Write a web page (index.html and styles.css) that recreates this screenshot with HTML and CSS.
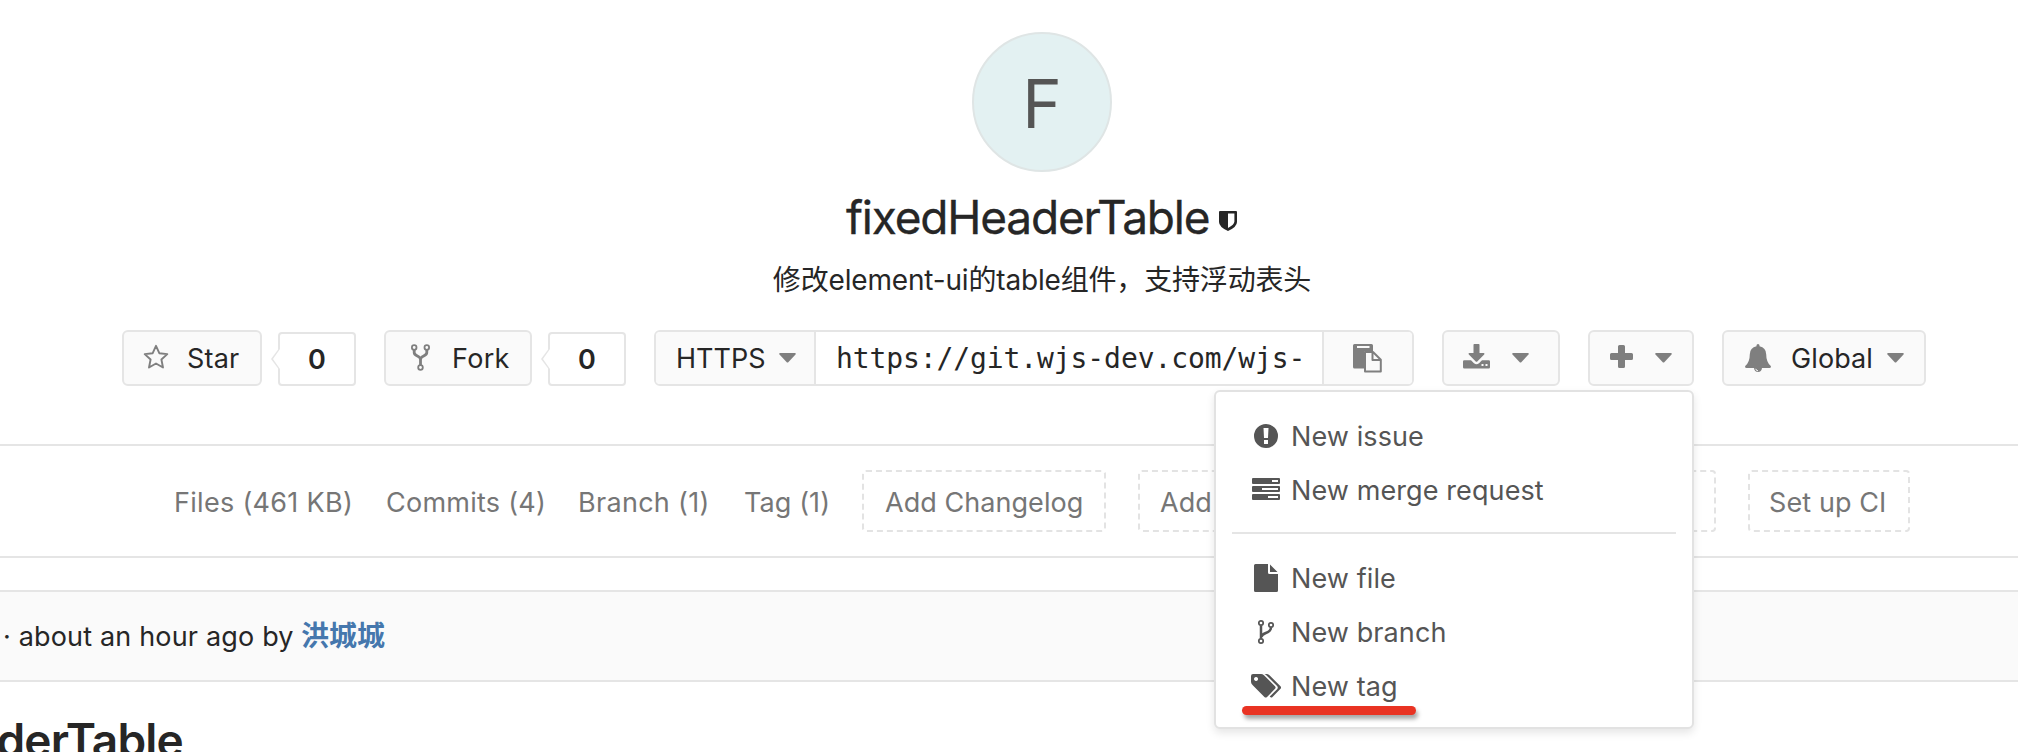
FILE: index.html
```html
<!DOCTYPE html>
<html lang="en">
<head>
<meta charset="utf-8">
<title>fixedHeaderTable</title>
<link rel="stylesheet" href="styles.css">
</head>
<body>
<header class="project">
  <div class="avatar">F</div>
  <h1 class="project-name"><span class="name-text">fixedHeaderTable</span>
    <svg class="shield" width="18" height="20" viewBox="0 0 18 20"><path fill="currentColor" fill-rule="evenodd" d="M1 0h16q1 0 1 1v10q0 5-9 9-9-4-9-9V1q0-1 1-1zm8 2.600v14.400q6.400-3.500 6.400-6.500V2.600z"/></svg>
  </h1>
  <p class="description">修改element-ui的table组件，支持浮动表头</p>
</header>

<div class="controls">
  <button class="btn star"><svg width="26" height="25" viewBox="0 0 26 25"><path fill="none" stroke="currentColor" stroke-width="1.900" stroke-linejoin="round" d="M13 1.800l3.300 7.400 8 .9-5.900 5.400 1.600 8L13 19.500l-7 4 1.600-8L1.700 10.100l8-.9z"/></svg><span class="t-star">Star</span></button>
  <span class="count">0</span>
  <button class="btn fork"><svg width="19" height="27" viewBox="0 0 19 27"><g fill="none" stroke="currentColor"><circle cx="3.200" cy="3.500" r="2.300" stroke-width="1.800"/><circle cx="15.800" cy="3.500" r="2.300" stroke-width="1.800"/><circle cx="9.500" cy="23.500" r="2.300" stroke-width="1.800"/><path stroke-width="2.800" d="M3.200 6v2.500c0 4 6.300 3 6.300 7V21M15.800 6v2.500c0 4-6.300 3-6.300 7"/></g></svg><span class="t-fork">Fork</span></button>
  <span class="count">0</span>
  <div class="clone">
    <button class="protocol"><span class="t-https">HTTPS</span><svg class="caret" width="17" height="10" viewBox="0 0 17 10"><path fill="currentColor" d="M1.200 0h14.600q1.600.2.700 1.600L9.500 8.900q-1 1-2 0L.5 1.600Q-.4.200 1.200 0z"/></svg></button>
    <div class="url">https://git.wjs-dev.com/wjs-</div>
    <button class="copy"><svg width="29" height="29" viewBox="0 0 29 29"><path fill="currentColor" fill-rule="evenodd" d="M1.500 0h17Q20 0 20 1.500V7h-7q-2 0-2 2v15.500H1.500Q0 24.500 0 23V1.500Q0 0 1.500 0zM4 2v2h12.500V2z"/><path fill="none" stroke="currentColor" stroke-width="2" stroke-linejoin="round" d="M12 8h8l7.800 7.800V27.500H12zM19.500 8v8h8"/></svg></button>
  </div>
  <button class="btn download"><svg width="27" height="25" viewBox="0 0 27 25"><path fill="currentColor" d="M10.500.8q0-.8.800-.8h4.400q.8 0 .8.800V9h4.200q1.400.3.500 1.600l-6.700 6.700q-1 1-2 0L5.800 10.600Q4.900 9.300 6.300 9h4.200z"/><path fill="currentColor" fill-rule="evenodd" d="M1.300 16.300H8l3 3q2.500 2 5 0l3-3h6.700q1.300 0 1.300 1.300v5.700q0 1.300-1.300 1.300H1.300Q0 24.600 0 23.300v-5.700q0-1.300 1.300-1.300zM18.500 20v2h2v-2zm4 0v2h2v-2z"/></svg><svg class="caret" width="17" height="10" viewBox="0 0 17 10"><path fill="currentColor" d="M1.200 0h14.600q1.600.2.700 1.600L9.500 8.900q-1 1-2 0L.5 1.600Q-.4.200 1.200 0z"/></svg></button>
  <button class="btn plus"><svg width="23" height="23" viewBox="0 0 23 23"><path fill="currentColor" d="M9.500 0h4q1.500 0 1.500 1.500V8h6.500Q23 8 23 9.500v4q0 1.500-1.500 1.500H15v6.500q0 1.500-1.500 1.500h-4Q8 23 8 21.500V15H1.500Q0 15 0 13.500v-4Q0 8 1.500 8H8V1.500Q8 0 9.500 0z"/></svg><svg class="caret" width="17" height="10" viewBox="0 0 17 10"><path fill="currentColor" d="M1.200 0h14.600q1.600.2.700 1.600L9.500 8.900q-1 1-2 0L.5 1.600Q-.4.200 1.200 0z"/></svg></button>
  <button class="btn global"><svg width="26" height="28" viewBox="0 0 26 28"><path fill="currentColor" d="M11.500 1.500Q11.500 0 13 0t1.500 1.500v.7q6.500 1.300 6.700 8 0 8 4.600 11.800.5 1.800-1.300 2H1.500q-1.800-.2-1.300-2Q4.800 18.200 4.800 10.200 5 3.500 11.500 2.200zM9 24h8q-.5 4-4 4t-4-4z"/><path fill="none" stroke="#fafafa" d="M10.800 24.800q.2 1.900 2.200 2"/></svg><span class="t-global">Global</span><svg class="caret" width="17" height="10" viewBox="0 0 17 10"><path fill="currentColor" d="M1.200 0h14.600q1.600.2.700 1.600L9.500 8.900q-1 1-2 0L.5 1.600Q-.4.200 1.200 0z"/></svg></button>
</div>

<nav class="stats">
  <a class="files">Files (461 KB)</a>
  <a class="commits">Commits (4)</a>
  <a class="branches">Branch (1)</a>
  <a class="tags">Tag (1)</a>
  <a class="missing changelog">Add Changelog</a>
  <a class="missing license">Add</a>
  <a class="missing ci">Set up CI</a>
</nav>

<section class="commit"><span class="ago">· about an hour ago by</span><a class="author">洪城城</a></section>
<h2 class="readme-title">derTable</h2>

<div class="menu">
  <a class="item"><svg width="30" height="28" viewBox="0 0 30 28"><path fill="currentColor" fill-rule="evenodd" d="M15 2a12 12 0 1 0 0 24 12 12 0 0 0 0-24zM12.500 6h5l-.5 10h-4zM13 18h4v4h-4z"/></svg><span>New issue</span></a>
  <a class="item"><svg width="30" height="28" viewBox="0 0 30 28"><path fill="currentColor" fill-rule="evenodd" d="M2 2h26q1 0 1 1v4q0 1-1 1H2Q1 8 1 7V3q0-1 1-1zm19 2v2h6V4zM2 10h26q1 0 1 1v4q0 1-1 1H2q-1 0-1-1v-4q0-1 1-1zm9 2v2h16v-2zM2 18h26q1 0 1 1v4q0 1-1 1H2q-1 0-1-1v-4q0-1 1-1zm15 2v2h10v-2z"/></svg><span>New merge request</span></a>
  <div class="divider"></div>
  <a class="item"><svg width="30" height="28" viewBox="0 0 30 28"><path fill="currentColor" d="M4.500 0H17v8.500Q17 10 18.500 10H27v16.500q0 1.500-1.500 1.500h-21Q3 28 3 26.500v-25Q3 0 4.500 0zM19 .5l7.500 7.500H19z"/></svg><span>New file</span></a>
  <a class="item"><svg width="30" height="28" viewBox="0 0 30 28"><g fill="none" stroke="currentColor"><g stroke-width="1.700"><circle cx="10" cy="5" r="2.200"/><circle cx="20" cy="7" r="2.200"/><circle cx="10" cy="23" r="2.200"/></g><path stroke-width="2.500" d="M10 7.500v13M20 9.500c0 6.500-9.500 4.500-9.500 9.500"/></g></svg><span>New branch</span></a>
  <a class="item"><svg width="30" height="28" viewBox="0 0 30 28"><path fill="currentColor" fill-rule="evenodd" d="M2 2h8q1.500 0 3 1.200l11 11q1.200 1.300 0 2.600l-8 8.200q-1.300 1-2.600 0L2 13.500Q0 11.500 0 10V4q0-2 2-2zm3 3a2 2 0 1 0 .1 0z"/><path fill="currentColor" d="M13.500 2h2q1.500 0 3 1.200l11 11q1.200 1.300 0 2.600l-8 8.200q-1.300 1.200-2.800-.4l7.600-7.700q1-1.400 0-2.700l-11-11q-1-.9-1.800-1.200z"/></svg><span>New tag</span></a>
  <div class="underline"></div>
</div>
</body>
</html>
```
FILE: styles.css
```css
* { box-sizing: border-box; }
body {
  margin: 0;
  width: 2018px;
  height: 752px;
  overflow: hidden;
  position: relative;
  background: #fff;
  color: #262626;
  font: 27px/36px Inter, "Noto Sans CJK SC", sans-serif;
}
svg { display: block; flex: none; }
span, a, .url { white-space: nowrap; }

.project {
  display: flex;
  flex-direction: column;
  align-items: center;
  width: 2084px;
  height: 330px;
  padding-top: 32px;
}
.avatar {
  width: 140px;
  height: 140px;
  border: 2px solid #dfe5e5;
  border-radius: 50%;
  background: #e3f1f2;
  color: #555;
  font-size: 67px;
  line-height: 140px;
  text-align: center;
}
.project-name {
  display: flex;
  width: 392px;
  height: 60px;
  margin: 15px 0 0;
  font-size: 46px;
  font-weight: 400;
  line-height: 60px;
}
.name-text { width: 373px; letter-spacing: -1.2px; -webkit-text-stroke: .3px #262626; }
.shield { margin-top: 24px; }
.description {
  margin: 15px 0 0;
  font-size: 28px;
  letter-spacing: -.17px;
}

.controls {
  display: flex;
  align-items: flex-start;
  height: 114px;
  padding-left: 122px;
}
button {
  display: flex;
  align-items: center;
  padding: 0;
  border: 2px solid #e5e5e5;
  background: #fafafa;
  color: #7f7f7f;
  font: inherit;
}
button span { padding-top: 2px; color: #262626; }
.btn { height: 56px; border-radius: 6px; }
.star { width: 140px; padding-left: 19px; }
.star svg { margin-top: -4px; }
.t-star { margin-left: 18px; letter-spacing: .2px; }
.count {
  position: relative;
  width: 78px;
  height: 54px;
  margin: 2px 28px 0 16px;
  border: 2px solid #e5e5e5;
  border-radius: 4px;
  font-weight: 600;
  line-height: 51px;
  text-align: center;
}
.count::before {
  content: "";
  position: absolute;
  left: -9px;
  top: 13px;
  width: 9px;
  height: 24px;
  background: #e5e5e5;
  clip-path: polygon(100% 0, 0 50%, 100% 100%);
}
.count::after {
  content: "";
  position: absolute;
  left: -7px;
  top: 15px;
  width: 9px;
  height: 20px;
  background: #fff;
  clip-path: polygon(100% 0, 78% 0, 0 50%, 78% 100%, 100% 100%);
}
.fork { width: 148px; padding-left: 25px; }
.fork svg { margin-top: -2px; }
.t-fork { margin-left: 22px; letter-spacing: .3px; }
.clone {
  display: flex;
  width: 760px;
  height: 56px;
  border: 2px solid #e5e5e5;
  border-radius: 6px;
  overflow: hidden;
}
.protocol { width: 160px; border-width: 0 2px 0 0; padding-left: 20px; }
.t-https { width: 103px; text-align: left; }
.url {
  width: 506px;
  padding-left: 20px;
  font: 28px/54px "DejaVu Sans Mono", monospace;
  letter-spacing: -.1px;
}
.copy { width: 90px; border-width: 0 0 0 2px; padding-left: 29px; }
.download { width: 118px; margin-left: 28px; padding-left: 19px; }
.download svg:first-child { margin-top: -4px; }
.download .caret { margin-left: 22px; }
.plus { width: 106px; margin-left: 28px; padding-left: 20px; }
.plus svg:first-child { margin-top: -3px; }
.plus .caret { margin-left: 22px; }
.global { width: 204px; margin-left: 28px; padding-left: 21px; }
.t-global { width: 96px; margin-left: 20px; text-align: left; letter-spacing: .1px; }

.stats {
  display: flex;
  align-items: center;
  height: 114px;
  padding-left: 174px;
  border-top: 2px solid #e5e5e5;
  border-bottom: 2px solid #e5e5e5;
  color: #767676;
}
.files, .commits, .branches, .tags { padding-top: 3px; }
.files { width: 212px; letter-spacing: .3px; }
.commits { width: 192px; letter-spacing: .25px; }
.branches { width: 166px; letter-spacing: .3px; }
.tags { width: 118px; letter-spacing: .1px; }
.missing {
  height: 62px;
  padding-left: 21px;
  border: 2px dashed #e3e3e3;
  border-radius: 4px;
  line-height: 61px;
}
.changelog { width: 244px; margin-right: 32px; letter-spacing: .05px; }
.license { width: 578px; margin-right: 32px; padding-left: 20px; }
.ci { width: 162px; padding-left: 19px; letter-spacing: .1px; }

.commit {
  display: flex;
  align-items: center;
  height: 92px;
  margin-top: 32px;
  padding-left: 3px;
  border-top: 2px solid #e5e5e5;
  border-bottom: 2px solid #e5e5e5;
  background: #fafafa;
}
.ago { width: 298px; padding-top: 1px; letter-spacing: .17px; }
.author { color: #4577ad; font-size: 28px; font-weight: 600; }
.readme-title {
  display: flex;
  justify-content: flex-end;
  width: 183px;
  margin: 28px 0 0;
  font-size: 46px;
  font-weight: 600;
  line-height: 60px;
  letter-spacing: -.8px;
}

.menu {
  position: absolute;
  left: 1214px;
  top: 390px;
  width: 480px;
  height: 339px;
  padding: 17px 16px 0;
  border: 2px solid #e2e2e2;
  border-radius: 6px;
  background: #fff;
  box-shadow: 0 4px 8px rgba(0, 0, 0, .1);
  color: #555;
}
.item { display: flex; align-items: center; height: 54px; padding-left: 19px; }
.item span { margin-left: 10px; padding-top: 2px; letter-spacing: .1px; }
.divider { height: 2px; margin: 15px 0 17px; background: #e5e5e5; }
.underline {
  position: absolute;
  left: 26px;
  top: 314px;
  width: 174px;
  height: 9px;
  border-radius: 5px;
  background: #e93323;
  box-shadow: 2px 4px 4px rgba(0, 0, 0, .35);
}
```
